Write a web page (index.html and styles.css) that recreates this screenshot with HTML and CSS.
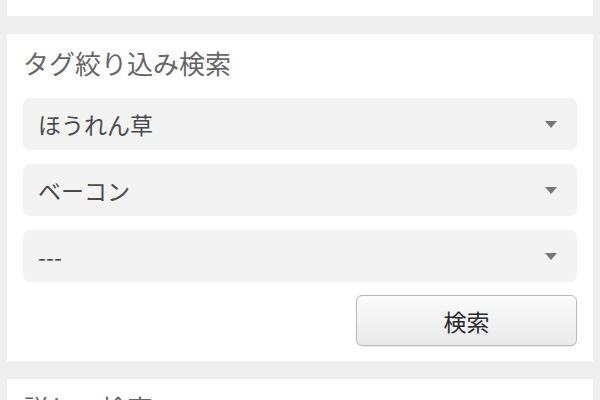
FILE: index.html
```html
<!DOCTYPE html>
<html lang="ja">
<head>
<meta charset="utf-8">
<title>タグ絞り込み検索</title>
<link rel="stylesheet" href="styles.css">
</head>
<body>
<div class="page">
  <div class="card card-top"></div>
  <div class="card">
    <h2 class="card-title">タグ絞り込み検索</h2>
    <div class="select">
      <span class="select-value">ほうれん草</span>
      <svg class="arrow" width="12" height="7" viewBox="0 0 12 7"><polygon points="0,0 12,0 6,7" fill="#777"/></svg>
    </div>
    <div class="select">
      <span class="select-value">ベーコン</span>
      <svg class="arrow" width="12" height="7" viewBox="0 0 12 7"><polygon points="0,0 12,0 6,7" fill="#777"/></svg>
    </div>
    <div class="select">
      <span class="select-value">---</span>
      <svg class="arrow" width="12" height="7" viewBox="0 0 12 7"><polygon points="0,0 12,0 6,7" fill="#777"/></svg>
    </div>
    <div class="actions">
      <button class="btn" type="button">検索</button>
    </div>
  </div>
  <div class="card">
    <h2 class="card-title">詳しい検索</h2>
  </div>
</div>
</body>
</html>
```
FILE: styles.css
```css
html, body {
  margin: 0;
  padding: 0;
  background: #efefef;
  font-family: "Noto Sans CJK JP", "Noto Sans", sans-serif;
}
.page {
  display: flex;
  flex-direction: column;
  gap: 18px;
  padding: 0 7px;
  height: 400px;
  overflow: hidden;
}
.card {
  background: #fff;
  padding: 14px 16px 15px 16px;
  flex-shrink: 0;
}
.card-top {
  height: 16px;
  padding: 0;
}
.card-title {
  margin: 0 0 20px 0;
  font-size: 26px;
  line-height: 30px;
  font-weight: normal;
  color: #666;
}
.select {
  display: flex;
  align-items: center;
  justify-content: space-between;
  height: 52px;
  margin-bottom: 14px;
  padding: 0 20px 0 15px;
  background: #f3f3f3;
  border-radius: 7px;
  box-sizing: border-box;
}
.select-value {
  font-size: 23px;
  color: #4a4a4a;
  line-height: 1;
}
.arrow {
  display: block;
}
.actions {
  display: flex;
  justify-content: flex-end;
  margin-top: -1px;
}
.btn {
  width: 221px;
  height: 51px;
  font-family: "Noto Sans CJK JP", sans-serif;
  font-size: 23px;
  color: #2a2a2a;
  background: linear-gradient(#fcfcfc, #e9e9e9);
  border: 1px solid #b8b8b8;
  border-radius: 6px;
  box-shadow: 0 1px 1px rgba(0,0,0,0.08);
  padding: 0;
}
```
